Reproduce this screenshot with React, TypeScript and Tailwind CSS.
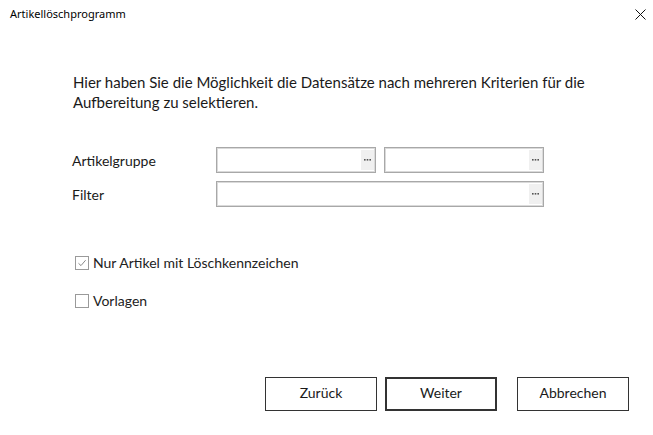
import React from 'react';

const Dots = () => (
  <div className="w-[13px] my-[2px] mr-[1px] bg-[#f0f0f0] flex items-center justify-center">
    <svg width="7" height="2" viewBox="0 0 7 2">
      <rect x="0" y="0" width="1.6" height="1.6" fill="#555" />
      <rect x="2.7" y="0" width="1.6" height="1.6" fill="#555" />
      <rect x="5.4" y="0" width="1.6" height="1.6" fill="#555" />
    </svg>
  </div>
);

const Lookup = ({ className }: { className: string }) => (
  <div
    className={`h-[26px] border border-[#a8a8a8] shadow-[inset_0_0_0_1px_#dadada] bg-white flex justify-end ${className}`}
  >
    <Dots />
  </div>
);

const Check = ({ checked, label }: { checked?: boolean; label: string }) => (
  <label className="flex items-center gap-[4px]">
    <span className="w-[14px] h-[14px] border border-[#9a9a9a] bg-white flex items-center justify-center">
      {checked && (
        <svg width="10" height="10" viewBox="0 0 10 10">
          <path d="M1.5 5.3 L4 7.6 L8.6 2.2" fill="none" stroke="#8a8a8a" strokeWidth="1" />
        </svg>
      )}
    </span>
    <span className="text-[14px] text-[#222]">{label}</span>
  </label>
);

export default function App() {
  return (
    <div className="w-[653px] h-[435px] bg-white relative font-['Lato','Noto_Sans',sans-serif] text-[#1a1a1a]">
      <div className="h-[28px] flex items-center justify-between pl-[10px] pr-[6px]">
        <span className="text-[11px] font-['Noto_Sans',sans-serif] text-black">Artikellöschprogramm</span>
        <svg width="11" height="11" viewBox="0 0 11 11" className="mr-[1px]">
          <path d="M0.5 0.5 L10.5 10.5 M10.5 0.5 L0.5 10.5" stroke="#111" strokeWidth="1" />
        </svg>
      </div>

      <div className="pl-[73px] pr-[30px] pt-[44px]">
        <p className="text-[15px] leading-[20px]">
          Hier haben Sie die Möglichkeit die Datensätze nach mehreren Kriterien für die
          <br />
          Aufbereitung zu selektieren.
        </p>

        <div className="mt-[35px] grid grid-cols-[136px_160px_160px] gap-x-[8px] gap-y-[8px] items-center w-fit -ml-[1px]">
          <span className="text-[14px]">Artikelgruppe</span>
          <Lookup className="w-[160px]" />
          <Lookup className="w-[160px]" />
          <span className="text-[14px]">Filter</span>
          <Lookup className="col-span-2" />
        </div>

        <div className="mt-[45px] flex flex-col gap-[17px] pl-[2px]">
          <Check checked label="Nur Artikel mit Löschkennzeichen" />
          <Check label="Vorlagen" />
        </div>
      </div>

      <div className="absolute left-[265px] top-[377px] flex">
        <button className="w-[112px] h-[34px] border border-[#333] text-[14px] bg-white pb-[3px]">Zurück</button>
        <button className="ml-[8px] w-[112px] h-[34px] border-2 border-[#333] text-[14px] bg-white pb-[3px]">Weiter</button>
        <button className="ml-[20px] w-[112px] h-[34px] border border-[#333] text-[14px] bg-white pb-[3px]">Abbrechen</button>
      </div>
    </div>
  );
}
